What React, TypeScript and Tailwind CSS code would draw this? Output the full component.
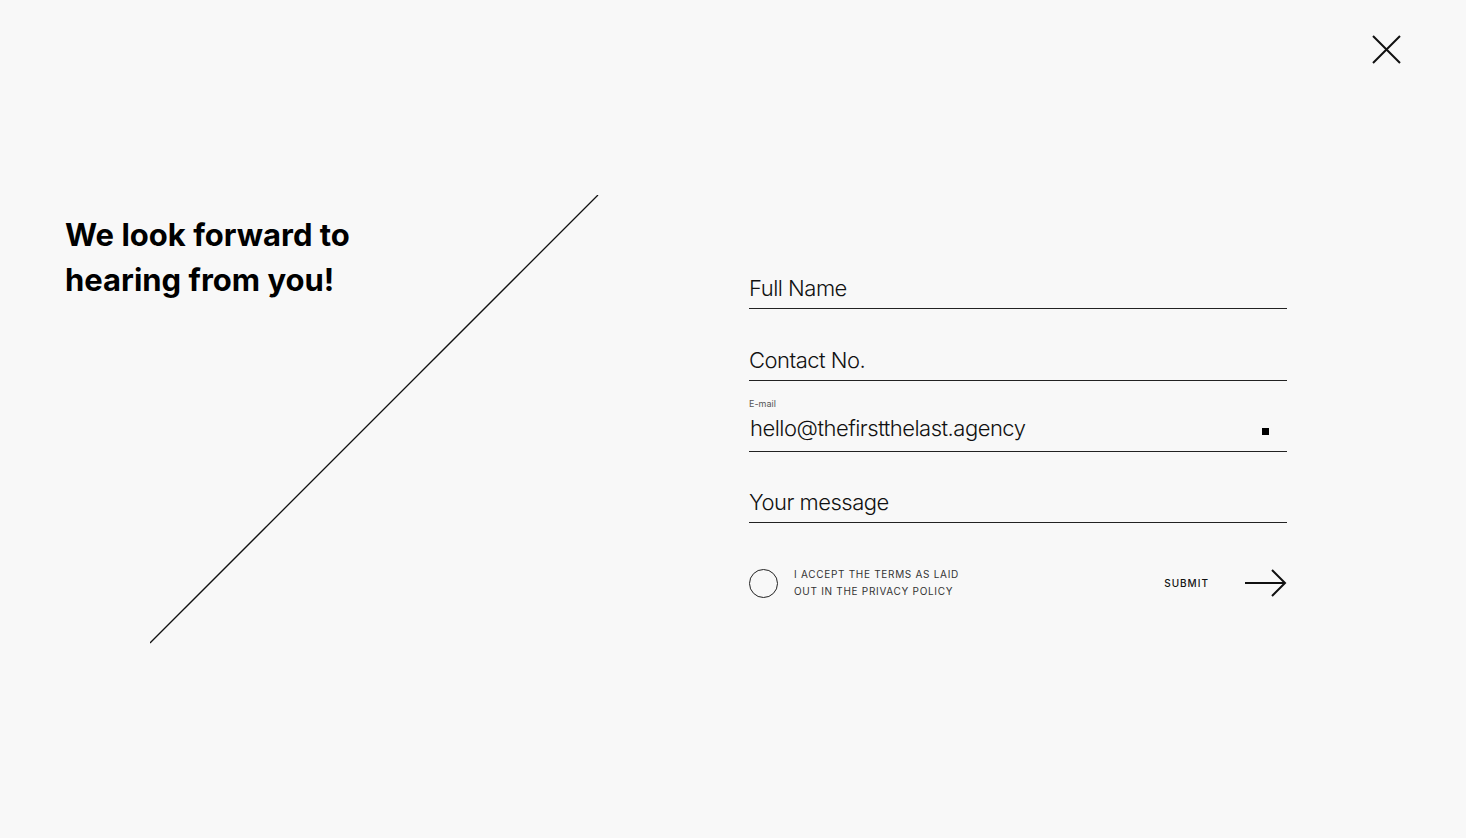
import React from 'react';

const fields = [
  { label: 'Full Name' },
  { label: 'Contact No.' },
  { label: 'E-mail', value: 'hello@thefirstthelast.agency' },
  { label: 'Your message' },
];

function Field({ label, value }: { label: string; value?: string }) {
  return (
    <div className="flex h-[71.33px] flex-col justify-end border-b border-[#222] pb-[6px]">
      {value ? (
        <div className="pb-[3px]">
          <div className="text-[9px] leading-[11px] text-[#555]">{label}</div>
          <div className="mt-[6px] flex items-center justify-between">
            <span className="pl-[1px] text-[22px] font-light leading-[27px] tracking-[-0.5px] text-[#111]">{value}</span>
            <span className="mr-[18px] mt-[6px] h-[7px] w-[7px] bg-black" />
          </div>
        </div>
      ) : (
        <span className="text-[22px] font-light leading-[27px] tracking-[-0.5px] text-[#111]">{label}</span>
      )}
    </div>
  );
}

export default function App() {
  return (
    <div
      className="relative h-[838px] w-full overflow-hidden bg-[#f8f8f8] text-black"
      style={{ fontFamily: 'Inter, "Noto Sans", sans-serif' }}
    >
      <button className="absolute right-[64px] top-[34px] h-[32px] w-[32px]">
        <svg viewBox="0 0 32 32" className="h-full w-full" fill="none" stroke="#111" strokeWidth="2">
          <path d="M3 2 L30 29 M30 2 L3 29" />
        </svg>
      </button>

      <div className="flex h-full">
        <div className="relative w-[749px] shrink-0">
          <h1 className="absolute left-[65px] top-[212px] text-[31px] font-bold leading-[45px]">
            We look forward to
            <br />
            hearing from you!
          </h1>
          <svg className="pointer-events-none absolute left-[150px] top-[195px]" width="449" height="449" viewBox="0 0 449 449">
            <line x1="0" y1="448" x2="448" y2="0" stroke="#111" strokeWidth="1.3" />
          </svg>
        </div>

        <div className="w-[538px] pt-[238px]">
          {fields.map((f) => (
            <Field key={f.label} label={f.label} value={f.value} />
          ))}

          <div className="mt-[43px] flex items-center">
            <span className="h-[29px] w-[29px] rounded-full border border-[#222]" />
            <p className="ml-[16px] text-[10px] uppercase leading-[17px] tracking-[0.7px] text-[#333]">
              I accept the terms as laid
              <br />
              out in the privacy policy
            </p>
            <span className="ml-auto text-[10px] font-medium uppercase tracking-[1px] text-[#111]">Submit</span>
            <svg className="ml-[36px]" width="42" height="30" viewBox="0 0 42 30" fill="none" stroke="#111" strokeWidth="2">
              <path d="M0 15 H40 M27 2 L40 15 L27 28" />
            </svg>
          </div>
        </div>
      </div>
    </div>
  );
}
